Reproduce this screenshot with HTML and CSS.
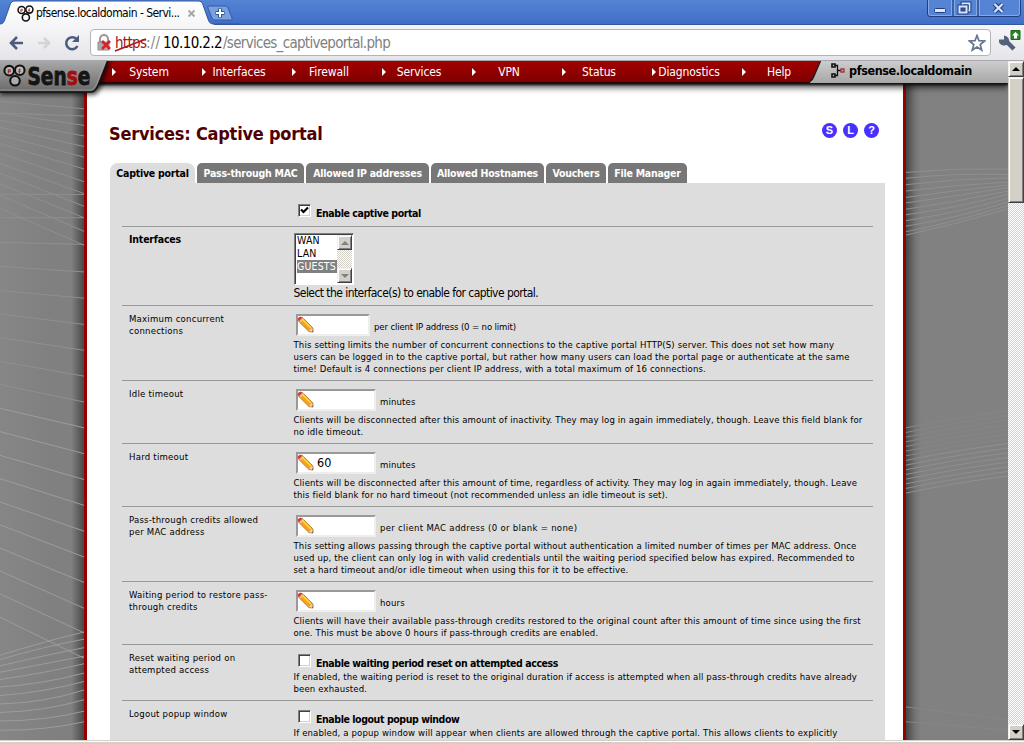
FILE: index.html
```html
<!DOCTYPE html>
<html lang="en">
<head>
<meta charset="utf-8">
<title>pfsense.localdomain - Services: Captive portal</title>
<link rel="stylesheet" href="styles.css">
</head>
<body>
<svg class="defs" width="0" height="0">
  <defs>
    <symbol id="pencil" viewBox="0 0 17 17">
      <path d="M1 2.500 3 1l2.500.6L16 12v4l-4-.4L1.300 5z" fill="#f6a21c" stroke="#b86a16" stroke-width=".8"/>
      <path d="M5.500 3.500 14 12" stroke="#ffdb48" stroke-width="1.500"/>
      <path d="M1 2.500 3 1l2.300.6-3.500 3.600z" fill="#e02c4c"/>
      <path d="m3 6 3.500-3.500" stroke="#dcb" stroke-width="1.200"/>
      <path d="m11.500 15 3.800-3.700.7 4.700z" fill="#f5d9b4" stroke="#b98c66" stroke-width=".5"/>
      <path d="M14.800 15 16 16v-1.500z" fill="#444"/>
    </symbol>
    <symbol id="rings" viewBox="0 0 24 24">
      <g fill="#fff" fill-opacity=".35" stroke="#111" stroke-width="2.200">
        <circle cx="6.500" cy="7" r="5"/><circle cx="17.500" cy="6.500" r="5"/><circle cx="12.500" cy="17.500" r="5"/>
      </g>
      <path d="M5.500 10V6h2v2h-2M17 10V5.500h1.500M16 7.500h2.500" fill="none" stroke="#a22" stroke-width="1.100"/>
    </symbol>
  </defs>
</svg>

<div class="tabstrip">
  <svg class="tab-shape" width="240" height="25" viewBox="0 0 240 25">
    <defs>
      <linearGradient id="tabfill" x2="0" y2="1"><stop stop-color="#fff"/><stop offset="1" stop-color="#f6f6f8"/></linearGradient>
    </defs>
    <path d="M0 25v-1c3 0 4-2 5-5L10 5c1-3 2-4 5-4h183c3 0 4 1 5 4l5 14c1 3 2 5 6 5v1z" fill="url(#tabfill)"/>
    <path d="M0 24c3 0 4-2 5-5L10 5c1-3 2-4 5-4h183c3 0 4 1 5 4l5 14c1 3 2 5 6 5h26" fill="none" stroke="#3157a0"/>
    <path d="M208 8q-1-2 1-2h16q2 0 3 2l4 10q1 2-1 2h-16q-2 0-3-2z" fill="#7ba0de" stroke="#345ba8"/>
    <path d="M220 8.500v9M215.500 13h9" stroke="#30549a" stroke-width="4"/>
    <path d="M220 9v8M216 13h8" stroke="#fff" stroke-width="2"/>
  </svg>
  <div class="tab-content">
    <svg class="tab-icon" width="17" height="17"><use href="#rings"/></svg>
    <span class="tab-title">pfsense.localdomain - Servi...</span>
    <svg width="9" height="9" viewBox="0 0 9 9"><path d="m1.500 1.500 6 6m0-6-6 6" stroke="#a5a5a5" stroke-width="1.800"/></svg>
  </div>
  <svg class="window-controls" width="94" height="18" viewBox="0 0 94 18">
    <path d="M.5-1v15q0 2.500 2.500 2.500h88q2.500 0 2.500-2.500V-1z" fill="#5584d4" stroke="#213f80"/>
    <path d="M1.500 0v13q0 2.500 2.500 2.500h20.500V0m3 0v15.500h22V0m3 0v15.500H90q2.500 0 2.500-2.500V0" fill="none" stroke="#86a9e3"/>
    <path d="M26 0v16M51 0v16" stroke="#213f80"/>
    <rect x="7.500" y="8.500" width="11" height="4" rx="1" fill="#d9e6fb" stroke="#213f80"/>
    <g fill="none"><path d="M35.500 3.500h7v7h-7z" stroke="#213f80" stroke-width="4"/><path d="M35.500 3.500h7v7h-7z" stroke="#d9e6fb" stroke-width="1.800"/><path d="M32.500 6.500h7v6h-7z" fill="#345b9e" stroke="#213f80" stroke-width="4"/><path d="M32.500 6.500h7v6h-7z" stroke="#d9e6fb" stroke-width="2"/></g>
    <path d="m67.500 4 8 8m0-8-8 8" stroke="#213f80" stroke-width="4.500"/><path d="m67.500 4 8 8m0-8-8 8" stroke="#d9e6fb" stroke-width="2.200"/>
  </svg>
</div>

<div class="toolbar">
  <svg width="82" height="28" viewBox="0 0 82 28" fill="none">
    <path d="M23 14H11m6-6-6 6 6 6" stroke="#4b5c7c" stroke-width="2.600"/>
    <path d="M38 14h11m-5-5 5 5-5 5" stroke="#d1d3d7" stroke-width="2.600"/>
    <path d="M76.500 10a6 6 0 1 0 1 7" stroke="#4b5c7c" stroke-width="2.500"/><path d="M79 6v7h-7z" fill="#4b5c7c"/>
  </svg>
  <div class="urlbar">
    <svg width="16" height="18" viewBox="0 0 16 18"><path d="M3 8V5a4 4 0 0 1 8 0v3" fill="none" stroke="#999" stroke-width="2"/><path d="M1 8h11v8H1z" fill="#bbb" stroke="#888"/><path d="M2 10h9M2 12h9M2 14h9" stroke="#999"/><path d="m5 7 8 8m0-8-8 8" stroke="#d9202c" stroke-width="2.600"/></svg>
    <div class="url"><span class="scheme">https<svg width="34" height="14" viewBox="0 0 34 14"><path d="M1 13 32 1" stroke="#b01818" stroke-width="1.800"/></svg></span><span class="sep">://</span><span class="host">10.10.2.2</span><span class="path">/services_captiveportal.php</span></div>
    <svg class="star" width="18" height="18" viewBox="0 0 18 18"><path d="m9 1.500 2 5.200 5.500.3-4.300 3.500 1.500 5.500L9 13l-4.700 3 1.500-5.500L1.500 7 7 6.700z" fill="#fff" stroke="#65758f" stroke-width="1.700"/></svg>
  </div>
  <svg width="24" height="28" viewBox="0 0 24 28">
    <path d="m9 13 7 7" stroke="#52617c" stroke-width="4.500"/>
    <path d="M1 10.500h5V6.500a5.500 5.500 0 0 1 5 7A5.500 5.500 0 0 1 1 13z" fill="#52617c"/>
    <path d="M13 1.500h9v9h-9z" fill="#2c8329" stroke="#1e671e"/><path d="M17.500 3 21 6.500h-2v3h-3v-3h-2z" fill="#fff"/>
  </svg>
</div>

<div class="viewport">
  <div class="site">
    <header class="menubar">
      <svg class="logo" width="116" height="38" viewBox="0 0 116 38">
        <defs>
          <linearGradient id="lg" x2="0" y2="1"><stop stop-color="#aaa"/><stop offset="1" stop-color="#696969"/></linearGradient>
          <filter id="blur" x="-10%" y="-20%" width="120%" height="150%"><feGaussianBlur stdDeviation="2"/></filter>
        </defs>
        <path d="M0 0h111l-9 24q-4 10-9 10H0z" opacity=".65" filter="url(#blur)"/>
        <path d="M-1-1h109l-9 23q-3 9-8 9H-1z" fill="url(#lg)" stroke="#111" stroke-width="1.600"/>
        <path d="M0 29h90q4 0 7-7l8-21" fill="none" stroke="#aaa" opacity=".6"/>
        <use href="#rings" x="3" y="3" width="23" height="23"/>
        <text class="logo-text" transform="translate(27.500 23.500) scale(.86 1)">Sen<tspan class="logo-red">s</tspan>e</text>
      </svg>
      <nav class="menu">
        <a>System</a><a>Interfaces</a><a>Firewall</a><a>Services</a><a>VPN</a><a>Status</a><a>Diagnostics</a><a>Help</a>
      </nav>
      <div class="hostname">
        <svg class="slant" width="200" height="22" viewBox="0 0 200 22">
          <defs><linearGradient id="hg" x2="0" y2="1"><stop stop-color="#cdcdcd"/><stop offset="1" stop-color="#a7a7a7"/></linearGradient></defs>
          <path d="M10 0h190v22H-2q4-1 6-7z" fill="url(#hg)"/><path d="M10.500 0 4 15q-2 6-7 6.500" fill="none" stroke="#1c1c1c" stroke-width="1.400"/>
        </svg>
        <svg class="net" width="14" height="15" viewBox="0 0 14 15"><path d="M3 2.500h3.500v10H3M6.500 7.500H10" fill="none" stroke="#111" stroke-width="1.300"/><path d="M1 1h3v3H1zM1 11h3v3H1z" fill="#bbb" stroke="#111" stroke-width="1.600"/><path d="M10 6h3v3h-3z" fill="#caa" stroke="#a33" stroke-width="1.300"/></svg>
        <span>pfsense.localdomain</span>
      </div>
    </header>

    <div class="columns">
      <svg class="side" width="84" height="657" viewBox="0 7 84 1551" preserveAspectRatio="none">
        <path class="faint" d="M0 50 84 68M0 78 84 85M0 78 84 107M0 95 84 132M0 112 84 157M0 130 84 182M0 150 84 210M0 172 84 240M0 197 84 268M0 220 84 298M0 245 84 325M0 272 84 357M0 303 84 390"/>
        <path class="faint" d="M0 270h84M0 325h84M0 383 84 388M0 440 84 453M0 497 84 515M0 552 84 577M0 608 84 638M0 664 84 699M0 719 84 760"/>
        <path class="fine" d="M0 775 84 821M0 830 84 882M0 886 84 943M0 941 84 1004M0 996 84 1065M0 1050 84 1126M0 1105 84 1186M0 1159 84 1247M0 1213 84 1305M0 1268 84 1365"/>
        <path class="fine" d="M0 1358Q45 1325 84 1303M0 1368Q45 1337 84 1320M0 1383Q45 1358 84 1340M0 1398Q45 1378 84 1360M0 1415Q45 1400 84 1378M0 1433Q45 1425 84 1400M0 1453Q45 1445 84 1420M0 1473Q45 1470 84 1440M0 1493Q45 1490 84 1463M0 1513Q45 1513 84 1490M0 1535Q45 1536 84 1515"/>
      </svg>
      <main class="page">
        <div class="heading">
          <h1>Services: Captive portal</h1>
          <div class="badges"><span>S</span><span>L</span><span>?</span></div>
        </div>
        <div class="tabs">
          <div class="tab t1 active">Captive portal</div><div class="tab t2">Pass-through MAC</div><div class="tab t3">Allowed IP addresses</div><div class="tab t4">Allowed Hostnames</div><div class="tab t5">Vouchers</div><div class="tab t6">File Manager</div>
        </div>
        <div class="panel">
          <div class="row">
            <div class="label"></div>
            <div class="value"><div class="check"><span class="box"><svg width="9" height="9" viewBox="0 0 9 9"><path d="M1 3.500 3.500 6 8 1.500" fill="none" stroke="#000" stroke-width="2.200"/></svg></span><b>Enable captive portal</b></div></div>
          </div>
          <div class="row">
            <div class="label"><b>Interfaces</b></div>
            <div class="value">
              <div class="listbox">
                <div class="options"><div>WAN</div><div>LAN</div><div class="selected">GUESTS</div></div>
                <div class="minibar"><i class="up"></i><i class="down"></i></div>
              </div>
              <div class="big">Select the interface(s) to enable for captive portal.</div>
            </div>
          </div>
          <div class="row">
            <div class="label">Maximum concurrent<br>connections</div>
            <div class="value">
              <div class="field"><span class="input short"><svg width="17" height="17"><use href="#pencil"/></svg></span><span class="tight">per client IP address (0 = no limit)</span></div>
              <p>This setting limits the number of concurrent connections to the captive portal HTTP(S) server. This does not set how many<br>users can be logged in to the captive portal, but rather how many users can load the portal page or authenticate at the same<br>time! Default is 4 connections per client IP address, with a total maximum of 16 connections.</p>
            </div>
          </div>
          <div class="row">
            <div class="label">Idle timeout</div>
            <div class="value">
              <div class="field"><span class="input"><svg width="17" height="17"><use href="#pencil"/></svg></span><span>minutes</span></div>
              <p>Clients will be disconnected after this amount of inactivity. They may log in again immediately, though. Leave this field blank for<br>no idle timeout.</p>
            </div>
          </div>
          <div class="row">
            <div class="label">Hard timeout</div>
            <div class="value">
              <div class="field"><span class="input"><svg width="17" height="17"><use href="#pencil"/></svg>60</span><span>minutes</span></div>
              <p>Clients will be disconnected after this amount of time, regardless of activity. They may log in again immediately, though. Leave<br>this field blank for no hard timeout (not recommended unless an idle timeout is set).</p>
            </div>
          </div>
          <div class="row">
            <div class="label">Pass-through credits allowed<br>per MAC address</div>
            <div class="value">
              <div class="field"><span class="input"><svg width="17" height="17"><use href="#pencil"/></svg></span><span class="loose">per client MAC address (0 or blank = none)</span></div>
              <p>This setting allows passing through the captive portal without authentication a limited number of times per MAC address. Once<br>used up, the client can only log in with valid credentials until the waiting period specified below has expired. Recommended to<br>set a hard timeout and/or idle timeout when using this for it to be effective.</p>
            </div>
          </div>
          <div class="row">
            <div class="label">Waiting period to restore pass-<br>through credits</div>
            <div class="value">
              <div class="field"><span class="input"><svg width="17" height="17"><use href="#pencil"/></svg></span><span>hours</span></div>
              <p>Clients will have their available pass-through credits restored to the original count after this amount of time since using the first<br>one. This must be above 0 hours if pass-through credits are enabled.</p>
            </div>
          </div>
          <div class="row">
            <div class="label">Reset waiting period on<br>attempted access</div>
            <div class="value">
              <div class="check"><span class="box"></span><b>Enable waiting period reset on attempted access</b></div>
              <p>If enabled, the waiting period is reset to the original duration if access is attempted when all pass-through credits have already<br>been exhausted.</p>
            </div>
          </div>
          <div class="row">
            <div class="label">Logout popup window</div>
            <div class="value">
              <div class="check"><span class="box"></span><b>Enable logout popup window</b></div>
              <p>If enabled, a popup window will appear when clients are allowed through the captive portal. This allows clients to explicitly</p>
            </div>
          </div>
        </div>
      </main>
      <svg class="side right" width="102" height="657" viewBox="0 7 102 1551" preserveAspectRatio="none">
        <path class="faint" d="M0 218Q50 207 102 210M0 232Q50 219 102 223M0 247Q50 233 102 231M0 262Q50 247 102 241M0 277Q50 260 102 248M0 290Q50 274 102 254M0 305Q50 288 102 262M0 318Q50 302 102 270M0 332Q50 314 102 279M0 345Q50 326 102 288M0 358Q50 335 102 296M0 366Q50 341 102 304"/>
        <path class="faint" d="M0 975Q55 948 102 935M0 964Q55 938 102 924M0 953Q55 928 102 913M0 942Q55 916 102 902M0 931Q55 905 102 891M0 920Q55 894 102 880M0 909Q55 883 102 869M0 898Q55 872 102 858"/>
        <path class="ghost" d="M0 887Q55 861 102 847M0 876Q55 850 102 836M0 865Q55 839 102 825M0 854Q55 828 102 814M0 843Q55 817 102 803M0 832Q55 806 102 792M0 821Q55 795 102 781M0 1515 102 1535M0 1480 102 1510"/>
      </svg>
    </div>
  </div>
  <div class="scrollbar">
    <div class="btn"><i class="arrow-up"></i></div>
    <div class="thumb"></div>
    <div class="btn last"><i class="arrow-down"></i></div>
  </div>
</div>
<div class="window-edge"></div>
</body>
</html>
```
FILE: styles.css
```css
* { box-sizing: border-box; }
body {
  margin: 0; width: 1024px; height: 744px; overflow: hidden;
  display: flex; flex-direction: column;
  font-family: "DejaVu Sans Condensed", "DejaVu Sans", sans-serif;
  font-stretch: condensed; color: #000; background: #d4d0c8;
}
.defs { position: absolute; }
svg { flex: none; }

.tabstrip {
  position: relative; flex: none; height: 25px; display: flex; justify-content: space-between;
  background: linear-gradient(#5484d4, #406ec8); border-bottom: 1px solid #3157a0;
}
.tab-shape { position: absolute; left: 0; top: 0; }
.tab-content { position: relative; display: flex; align-items: center; padding-left: 17px; height: 26px; }
.tab-icon { margin-right: 2px; }
.tab-title { font-size: 12px; width: 151px; white-space: nowrap; letter-spacing: -.53px; }
.window-controls { margin-right: 3px; }

.toolbar {
  flex: none; height: 36px; display: flex; align-items: center; padding-right: 2px;
  background: linear-gradient(#f6f6f8, #e5e4e9); border-bottom: 1px solid #aaa8ae;
}
.urlbar {
  margin: 0 7px 0 8px; flex: 1; height: 27px; display: flex; align-items: center; gap: 2px;
  padding: 0 4px 0 6px; border: 1px solid #b3b4b8; border-radius: 4px; background: #fff;
}
.url { flex: 1; font-size: 15px; display: flex; white-space: nowrap; letter-spacing: -.7px; }
.scheme { position: relative; color: #a01818; width: 31px; }
.scheme svg { position: absolute; left: -1px; top: 4px; }
.sep { color: #888; width: 17px; letter-spacing: .2px; }
.host { width: 60px; letter-spacing: -.6px; }
.path { color: #808080; }

.viewport { flex: none; height: 679px; display: flex; overflow: hidden; }
.site { width: 1008px; overflow: hidden; background: #808080; }

.menubar {
  position: relative; z-index: 2; height: 22px; display: flex;
  background: linear-gradient(#a10000, #800000); border-bottom: 1px solid #200;
  box-shadow: 0 2px 2px #111, 0 5px 6px rgba(0, 0, 0, .6);
}
.logo { position: absolute; left: 0; top: 0; }
.logo-text { font: bold 24px "DejaVu Sans Condensed", sans-serif; fill: #151515; stroke: #151515; stroke-width: .8; }
.logo-red { fill: #a01010; stroke: #a01010; }
.menu { display: flex; flex: none; padding-left: 108px; width: 818px; }
.menu a {
  position: relative; width: 90px; padding-right: 8px; flex: none; text-align: center;
  font-size: 12px; line-height: 22px; color: #fff; letter-spacing: -.1px;
}
.menu a::before {
  content: ""; position: absolute; left: 4px; top: 7px;
  border: solid transparent; border-width: 4px 0 4px 4px; border-left-color: #fff;
}
.hostname {
  position: relative; flex: 1; height: 22px; display: flex; align-items: center; gap: 4px; padding-left: 13px;
  font-size: 12.500px; font-weight: bold; letter-spacing: -.4px; padding-bottom: 4px;
}
.slant { position: absolute; left: -8px; top: 0; }
.net, .hostname span { position: relative; }

.columns { display: flex; height: 657px; }
.side { background: linear-gradient(90deg, #868686, #808080 60%, #808080 85%, #484848); }
.side.right { background: linear-gradient(90deg, #454545, #747474 9%, #818181 15%, #818181); }
.side path { fill: none; stroke: #9c9c9c; stroke-width: 1; vector-effect: non-scaling-stroke; }
.side .faint { stroke: #8f8f8f; }
.side .ghost { stroke: #868686; }

.page {
  width: 822px; flex: none; padding: 40px 18px 0 23px;
  background: #fff; border: solid #980000; border-width: 0 3px;
}
.heading { display: flex; justify-content: space-between; height: 40px; padding: 0 6px 0 0; }
h1 { margin: 0 0 0 -1px; font-size: 18px; line-height: 22px; letter-spacing: -.22px; color: #500000; white-space: nowrap; }
.badges { display: flex; gap: 6px; }
.badges span {
  width: 15px; height: 15px; border-radius: 50%; background: #4a30ff; color: #fff;
  font: bold 11px/15px "Liberation Sans", sans-serif; text-align: center;
}
.tabs { display: flex; gap: 2px; height: 20px; }
.tab {
  background: #777; color: #fff; border-radius: 5px 5px 0 0; text-align: center; white-space: nowrap;
  font-size: 10.500px; font-weight: bold; line-height: 21px; letter-spacing: -.24px;
}
.tab.active { background: #ddd; color: #000; border-radius: 8px 8px 0 0; }
.t1 { width: 85px; } .t2 { width: 107px; } .t3 { width: 123px; } .t4 { width: 113px; } .t5 { width: 60px; } .t6 { width: 79px; }

.panel { width: 775px; height: 600px; background: #ddd; padding: 12px; font-size: 9.500px; line-height: 12px; white-space: nowrap; overflow: hidden; letter-spacing: .14px; }
.row { display: grid; grid-template-columns: 171.500px 1fr; padding: 6px 0; border-bottom: 1px solid #999; }
.label { padding: 1px 0 0 7px; margin-bottom: -1px; letter-spacing: .23px; }
.row b { font-size: 10.500px; letter-spacing: -.42px; }
.row .label b { letter-spacing: -.2px; position: relative; top: -1px; }
p { margin: 0 0 -1px; padding-top: 1px; }
.big { font-size: 12px; line-height: 14px; letter-spacing: -.56px; padding-top: 1px; height: 14px; }
.check { display: flex; height: 19px; padding-left: 4.500px; gap: 5px; }
.check b { padding-top: 6px; }
.box {
  width: 13px; height: 13px; margin-top: 3px; background: #fff; padding: 1px; display: flex;
  border: 1px solid; border-color: #808080 #fff #fff #808080; box-shadow: inset 1px 1px #404040, inset -1px -1px #d4d0c8;
}
.field { display: flex; align-items: flex-start; gap: 4px; height: 26px; padding: 2px 0 0 2.500px; }
.field > span:last-child { padding-top: 7px; }
.field .tight { letter-spacing: -.13px; }
.field .loose { letter-spacing: .3px; }
.input {
  width: 80px; height: 22px; background: #fff; border: 2px solid; border-color: #999 #eee #eee #999;
  display: flex; align-items: center; gap: 3px; font-size: 12.500px;
}
.input.short { width: 74px; }
.input svg { margin: -1px 0 0 -1px; }
.listbox {
  width: 60px; height: 52px; display: flex; margin-left: .5px; background: #fff;
  border: 1px solid; border-color: #808080 #fff #fff #808080; box-shadow: inset 1px 1px #404040; padding: 1px;
}
.options { width: 42px; font-size: 10.500px; line-height: 13px; letter-spacing: .15px; margin-top: -1px; padding-left: 1px; }
.options div { padding-left: 0; }
.options .selected { background: #808080; color: #fff; }
.minibar { width: 15px; display: flex; flex-direction: column; justify-content: space-between; background: repeating-conic-gradient(#fff 0 25%, #d4d0c8 0 50%) 0 0 / 2px 2px; }
.minibar i, .btn {
  height: 15px; display: flex; align-items: center; justify-content: center; background: #d4d0c8;
  border: 1px solid; border-color: #eee #404040 #404040 #eee; box-shadow: inset 1px 1px #fff, inset -1px -1px #808080;
}
.up::before, .down::before, .arrow-up, .arrow-down { content: ""; border: solid transparent; border-width: 0 4px 4px; border-bottom-color: #808080; }
.down::before, .arrow-down { border-width: 4px 4px 0; border-top-color: #808080; }
.arrow-up { border-bottom-color: #000; }
.arrow-down { border-top-color: #000; }

.scrollbar { width: 16px; display: flex; flex-direction: column; background: repeating-conic-gradient(#fff 0 25%, #d4d0c8 0 50%) 0 0 / 2px 2px; }
.btn { height: 16px; }
.btn.last { margin-top: auto; }
.thumb { height: 126px; background: #d4d0c8; border: 1px solid; border-color: #eee #404040 #404040 #d4d0c8; box-shadow: inset 1px 1px #fff, inset -1px -1px #808080; }
.window-edge { height: 4px; background: #d4d0c8; border-top: 1px solid #d4d0c8; box-shadow: inset 0 1px #fff; }
```
